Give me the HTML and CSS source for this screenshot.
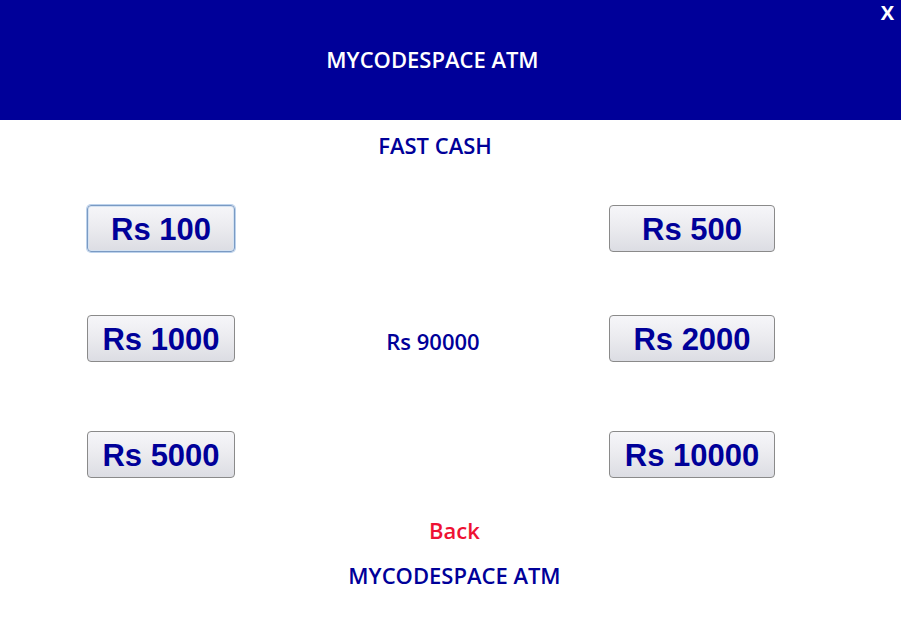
FILE: index.html
```html
<!DOCTYPE html>
<html>
<head>
<meta charset="utf-8">
<link rel="stylesheet" href="styles.css">
</head>
<body>
<div class="page">
  <header class="header">
    <div class="title">MYCODESPACE ATM</div>
    <button class="close">X</button>
  </header>
  <main class="main">
    <div class="heading">FAST CASH</div>
    <div class="grid">
      <div class="row r1">
        <button class="btn btn-left focused">Rs 100</button>
        <div class="mid"></div>
        <button class="btn btn-right">Rs 500</button>
      </div>
      <div class="row r2">
        <button class="btn btn-left">Rs 1000</button>
        <div class="mid balance">Rs 90000</div>
        <button class="btn btn-right">Rs 2000</button>
      </div>
      <div class="row r3">
        <button class="btn btn-left">Rs 5000</button>
        <div class="mid"></div>
        <button class="btn btn-right">Rs 10000</button>
      </div>
    </div>
    <div class="back">Back</div>
    <div class="footer">MYCODESPACE ATM</div>
  </main>
</div>
</body>
</html>
```
FILE: styles.css
```css
html, body {
  margin: 0;
  padding: 0;
  background: #ffffff;
}
.page {
  width: 901px;
  height: 630px;
  position: relative;
  overflow: hidden;
  font-family: "Open Sans", "DejaVu Sans", sans-serif;
  font-weight: 600;
}
.header {
  height: 120px;
  background: #000099;
  display: flex;
  align-items: center;
  justify-content: center;
  padding-right: 36px;
  padding-bottom: 2px;
  box-sizing: border-box;
}
.title {
  color: #ffffff;
  font-size: 22px;
  line-height: 26px;
}
.close {
  position: absolute;
  top: 1px;
  right: 7px;
  background: none;
  border: 0;
  padding: 0;
  color: #ffffff;
  font-family: "Open Sans", sans-serif;
  font-weight: 700;
  font-size: 20px;
  line-height: 24px;
}
.main {
  display: flex;
  flex-direction: column;
  padding-top: 12px;
}
.heading {
  color: #000099;
  font-size: 22px;
  line-height: 26px;
  text-align: center;
  padding-right: 31px;
}
.grid {
  display: flex;
  flex-direction: column;
  margin-top: 47px;
  padding-left: 87px;
  padding-right: 126px;
}
.row {
  display: flex;
  align-items: center;
  height: 47px;
}
.r2 { margin-top: 63px; }
.r3 { margin-top: 69px; }
.mid {
  flex: 1;
  text-align: center;
  padding-left: 22px;
}
.balance {
  color: #000099;
  font-size: 22px;
  line-height: 26px;
  padding-top: 4px;
}
.btn {
  height: 47px;
  box-sizing: border-box;
  border: 1px solid #8a8a8a;
  border-radius: 4px;
  background: linear-gradient(#f6f6f9 0%, #ececf0 45%, #dcdde3 100%);
  color: #000099;
  font-family: "Liberation Sans", Arial, sans-serif;
  font-weight: 700;
  font-size: 31px;
  line-height: 47px;
  padding: 0;
  margin: 0;
}
.btn-left { width: 148px; }
.btn-right { width: 166px; }
.focused {
  border: 1px solid #7a9ac3;
  box-shadow: 0 0 0 1px #bcd2ec, inset 0 0 0 1px #d4e2f2;
}
.back {
  color: #ee1133;
  font-size: 22px;
  line-height: 26px;
  text-align: center;
  margin-top: 39px;
  padding-left: 8px;
}
.footer {
  color: #000099;
  font-size: 22px;
  line-height: 26px;
  text-align: center;
  margin-top: 19px;
  padding-left: 8px;
}
```
